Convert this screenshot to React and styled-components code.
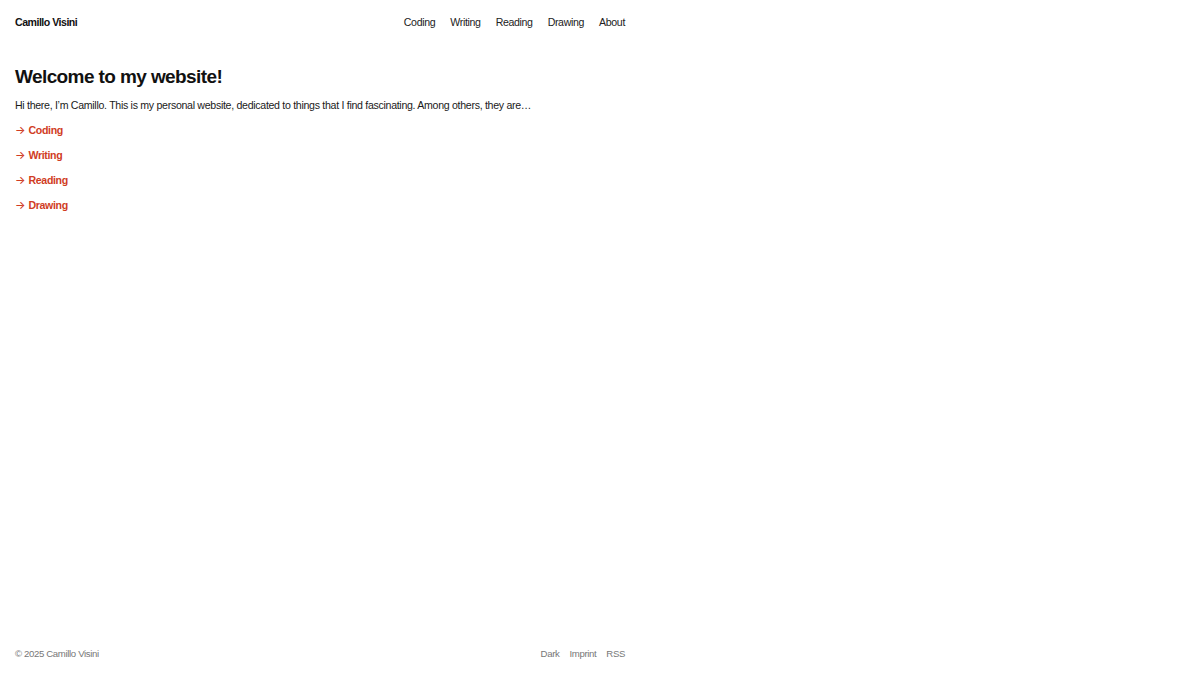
import React from 'react';
import styled, { createGlobalStyle } from 'styled-components';

const GlobalStyle = createGlobalStyle`
  html, body { margin: 0; padding: 0; background: #fff; }
  body {
    font-family: "Liberation Sans", Arial, sans-serif;
    color: #1a1a1a;
    -webkit-font-smoothing: antialiased;
  }
  a { text-decoration: none; color: inherit; }
`;

const links = ['Coding', 'Writing', 'Reading', 'Drawing'];

const Page = styled.div`
  min-height: 100vh;
  box-sizing: border-box;
  width: 640px;
  padding: 0 15px;
  display: flex;
  flex-direction: column;
`;

const Header = styled.header`
  height: 44px;
  display: flex;
  align-items: center;
  justify-content: space-between;
  font-size: 10.6px;
`;

const Brand = styled.a`
  font-weight: 700;
  letter-spacing: -0.5px;
  color: #111;
`;

const Nav = styled.nav`
  display: flex;
  gap: 15px;
  letter-spacing: -0.35px;
  color: #222;
`;

const Main = styled.main`
  flex: 1;
  padding-top: 18px;
`;

const Title = styled.h1`
  margin: 0;
  font-size: 19px;
  font-weight: 700;
  line-height: 29px;
  letter-spacing: -0.6px;
  color: #111;
`;

const Intro = styled.p`
  margin: 2px 0 0;
  font-size: 10.6px;
  line-height: 25px;
  letter-spacing: -0.3px;
  color: #1a1a1a;
`;

const LinkList = styled.ul`
  list-style: none;
  margin: 0;
  padding: 0;
`;

const LinkItem = styled.li`
  line-height: 25px;
  font-size: 10.6px;
  font-weight: 700;
  letter-spacing: -0.35px;
  color: #d03c24;
`;

const Arrow = styled.span`
  font-family: Inter, sans-serif;
  font-size: 11px;
  font-weight: 500;
  letter-spacing: 0;
  margin-right: 3px;
`;

const Footer = styled.footer`
  height: 34px;
  display: flex;
  align-items: flex-start;
  justify-content: space-between;
  font-size: 9.6px;
  letter-spacing: -0.35px;
  color: #777;
  line-height: 26px;
`;

const FooterNav = styled.div`
  display: flex;
  gap: 10px;
`;

export default function App() {
  return (
    <>
      <GlobalStyle />
      <Page>
        <Header>
          <Brand href="#">Camillo Visini</Brand>
          <Nav>
            {[...links, 'About'].map((l) => (
              <a key={l} href="#">{l}</a>
            ))}
          </Nav>
        </Header>
        <Main>
          <Title>Welcome to my website!</Title>
          <Intro>
            Hi there, I’m Camillo. This is my personal website, dedicated to things that I find fascinating. Among others, they are…
          </Intro>
          <LinkList>
            {links.map((l) => (
              <LinkItem key={l}>
                <a href="#"><Arrow>→</Arrow>{l}</a>
              </LinkItem>
            ))}
          </LinkList>
        </Main>
        <Footer>
          <span>© 2025 Camillo Visini</span>
          <FooterNav>
            <a href="#">Dark</a>
            <a href="#">Imprint</a>
            <a href="#">RSS</a>
          </FooterNav>
        </Footer>
      </Page>
    </>
  );
}
